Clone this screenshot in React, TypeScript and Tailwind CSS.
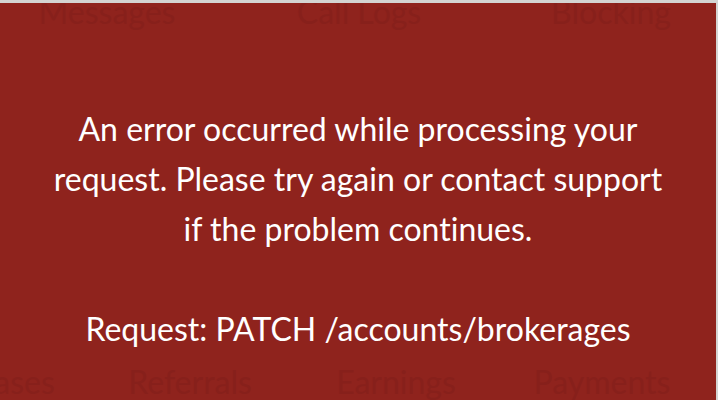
const topTabs = ['Messages', 'Call Logs', 'Blocking']
const bottomTabs = ['Purchases', 'Referrals', 'Earnings', 'Payments']

export default function App() {
  return (
    <main
      className="relative w-[718px] h-[400px] overflow-hidden bg-[#8f231d] border-t-[3px] border-r-2 border-[#d4d4d2] [font-variant-ligatures:none]"
      style={{ fontFamily: 'Lato, "Open Sans", sans-serif' }}
    >
      {/* faded tabs behind the error */}
      <div className="flex ml-[-19px] mt-[-7px] text-[32px] leading-[32px] text-[#87201b]">
        {topTabs.map(t => (
          <div key={t} className="w-[252px] shrink-0 text-center">{t}</div>
        ))}
      </div>
      <div className="absolute left-[-119px] bottom-[2px] flex text-[32px] leading-[32px] text-[#87201b]">
        {bottomTabs.map(t => (
          <div key={t} className="w-[206px] shrink-0 text-center">{t}</div>
        ))}
      </div>

      {/* error message */}
      <div className="absolute inset-0 flex flex-col items-center pt-[101px] px-[44px] text-center text-white text-[32px] leading-[50px]">
        <p>
          An error occurred while processing your request. Please try again or contact support if the problem continues.
        </p>
        <p className="mt-[50px]">Request: PATCH /accounts/brokerages</p>
      </div>
    </main>
  )
}
